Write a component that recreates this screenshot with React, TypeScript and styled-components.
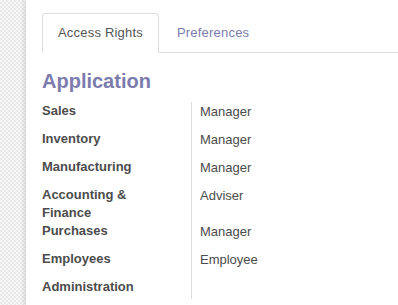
import React, { useState } from "react";
import styled, { createGlobalStyle } from "styled-components";

const GlobalStyle = createGlobalStyle`
  html, body {
    margin: 0;
    padding: 0;
    height: 100%;
  }
  body {
    font-family: "Liberation Sans", Arial, sans-serif;
    font-size: 13px;
    color: #4c4c4c;
    background: repeating-conic-gradient(#e9e9e9 0 25%, #f7f7f7 0 50%) 0 0 / 4px 4px;
  }
`;

const Page = styled.div`
  display: flex;
  min-height: 305px;
`;

const Sheet = styled.div`
  flex: 1;
  margin-left: 25px;
  background: #fff;
  border-left: 1px solid #dcdcdc;
  box-shadow: -2px 0 3px rgba(0, 0, 0, 0.08);
  padding: 13px 0 0 16px;
  min-height: 292px;
`;

const Tabs = styled.ul`
  display: flex;
  list-style: none;
  margin: 0;
  padding: 0;
  border-bottom: 1px solid #ddd;
`;

const Tab = styled.li<{ $active?: boolean }>`
  margin-right: 2px;
  margin-bottom: -1px;
  padding: 10px 15px;
  line-height: 18px;
  letter-spacing: 0.2px;
  border: 1px solid ${(p) => (p.$active ? "#ddd" : "transparent")};
  border-bottom-color: ${(p) => (p.$active ? "#fff" : "transparent")};
  border-radius: 4px 4px 0 0;
  background: ${(p) => (p.$active ? "#fff" : "transparent")};
  color: ${(p) => (p.$active ? "#555" : "#7c7bad")};
  cursor: pointer;
`;

const Heading = styled.h2`
  margin: 17px 0 9px;
  font-size: 20px;
  line-height: 23px;
  font-weight: bold;
  color: #7c7bad;
`;

const Table = styled.div`
  display: grid;
  grid-template-columns: 149px 1fr;
`;

const Label = styled.div`
  font-weight: bold;
  line-height: 18px;
  padding-right: 20px;
`;

const Value = styled.div`
  box-sizing: border-box;
  min-height: 21px;
  padding: 1px 0 9px 8px;
  line-height: 18px;
  border-left: 1px solid #ddd;
`;

const rights = [
  { app: "Sales", role: "Manager" },
  { app: "Inventory", role: "Manager" },
  { app: "Manufacturing", role: "Manager" },
  { app: "Accounting & Finance", role: "Adviser" },
  { app: "Purchases", role: "Manager" },
  { app: "Employees", role: "Employee" },
  { app: "Administration", role: "" },
];

const App = () => {
  const [tab, setTab] = useState(0);
  return (
    <>
      <GlobalStyle />
      <Page>
        <Sheet>
          <Tabs>
            <Tab $active={tab === 0} onClick={() => setTab(0)}>
              Access Rights
            </Tab>
            <Tab $active={tab === 1} onClick={() => setTab(1)}>
              Preferences
            </Tab>
          </Tabs>
          <Heading>Application</Heading>
          <Table>
            {rights.map(({ app, role }) => (
              <React.Fragment key={app}>
                <Label>{app}</Label>
                <Value>{role}</Value>
              </React.Fragment>
            ))}
          </Table>
        </Sheet>
      </Page>
    </>
  );
};

export default App;
